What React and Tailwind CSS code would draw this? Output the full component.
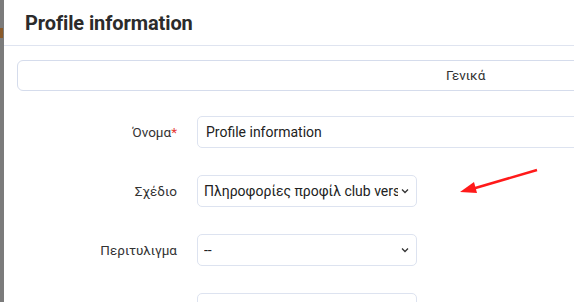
export default function App() {
  const rows = [
    { label: "Σχέδιο", value: "Πληροφορίες προφίλ club version", select: true },
    { label: "Περιτυλιγμα", value: "--", select: true },
  ];

  return (
    <div className="flex h-[302px] w-[574px] overflow-hidden bg-white font-['Roboto',sans-serif] text-[#333]">
      {/* dimmed page behind the modal */}
      <div className="relative w-[4px] shrink-0 bg-[#7b7b7b]">
        <div className="absolute left-0 top-[28px] h-[10px] w-[3px] bg-[#8a5a2a]" />
      </div>

      <div className="relative flex-1">
        <div className="flex h-[46px] items-center border-b border-[#dfe4f0] pl-[21px]">
          <h2 className="text-[20px] font-bold tracking-[-0.1px] text-[#2b2b2b]">Profile information</h2>
        </div>

        <div className="pl-[13px] pt-[14px]">
          <div className="flex h-[31px] w-[900px] items-center rounded-l-[6px] border border-[#d5dcec] pl-[428px] text-[13.5px] text-[#333]">
            Γενικά
          </div>
        </div>

        <div className="flex flex-col gap-[27px] pt-[25px]">
          <div className="flex items-center">
            <label className="w-[174px] pr-[1px] text-right text-[13.5px]">
              Όνομα<span className="text-[#e53935]">*</span>
            </label>
            <div className="ml-[19px] flex h-[32px] w-[420px] items-center rounded-l-[5px] border border-[#dde3f0] pl-[8px] text-[14px] text-[#222]">
              Profile information
            </div>
          </div>

          {rows.map((r) => (
            <div key={r.label} className="flex items-center">
              <label className="w-[173px] text-right text-[13.5px]">{r.label}</label>
              <div className="ml-[20px] flex h-[32px] w-[220px] items-center rounded-[5px] border border-[#dde3f0] pl-[6px] pr-[6px] text-[14px] text-[#222]">
                <span className="flex-1 overflow-hidden whitespace-nowrap">{r.value}</span>
                <svg width="10" height="10" viewBox="0 0 10 10" className="ml-[2px] shrink-0">
                  <path d="M2 3.5 L5 6.5 L8 3.5" fill="none" stroke="#333" strokeWidth="1.3" />
                </svg>
              </div>
            </div>
          ))}

          <div className="flex items-start">
            <label className="w-[173px] pt-[7px] text-right text-[13.5px]">SEO τίτλος</label>
            <div className="ml-[20px] h-[32px] w-[220px] rounded-[5px] border border-[#dde3f0]" />
          </div>
        </div>

        <svg className="absolute left-[452px] top-[164px]" width="90" height="34" viewBox="0 0 90 34">
          <line x1="81" y1="6" x2="16" y2="25" stroke="#ff1a1a" strokeWidth="2.5" />
          <polygon points="4,28 18,18 21,29" fill="#ff1a1a" />
        </svg>
      </div>
    </div>
  );
}
